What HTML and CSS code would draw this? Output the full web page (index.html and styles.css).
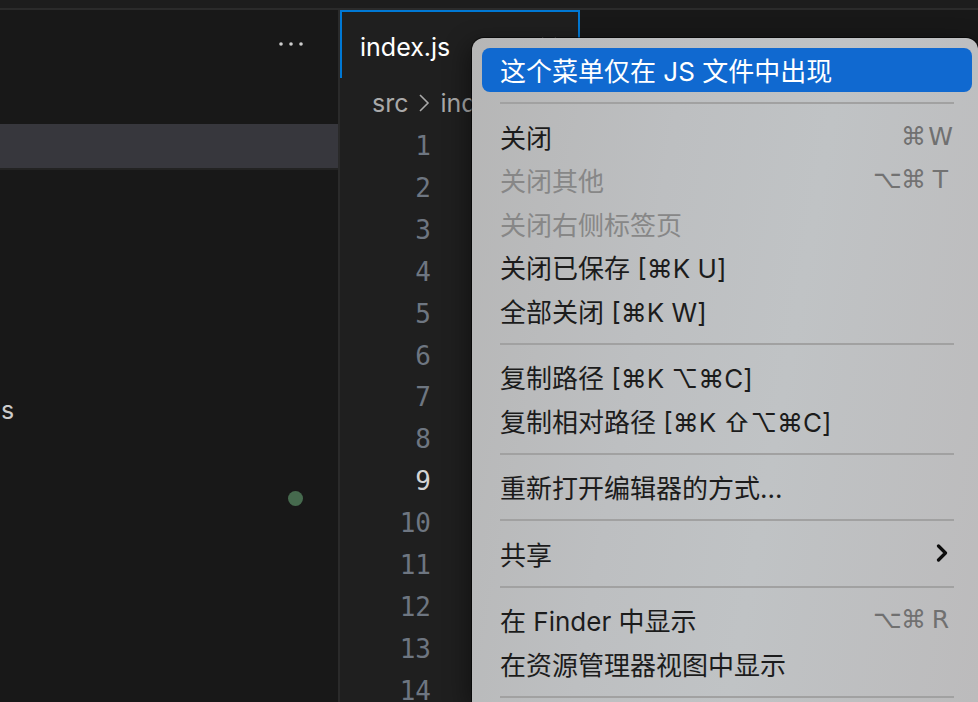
FILE: index.html
```html
<!DOCTYPE html>
<html lang="zh-CN">
<head>
<meta charset="utf-8">
<title>VS Code 菜单</title>
<link rel="stylesheet" href="styles.css">
</head>
<body>
<div class="titlebar"></div>
<div class="main">
  <aside class="sidebar">
    <div class="side-head">
      <svg class="more" width="26" height="6" viewBox="0 0 26 6"><circle cx="3" cy="3" r="1.8"/><circle cx="13" cy="3" r="1.8"/><circle cx="23" cy="3" r="1.8"/></svg>
    </div>
    <div class="side-list">
      <div class="row selected"></div>
      <div class="row"></div>
      <div class="row"></div>
      <div class="row"></div>
      <div class="row"></div>
      <div class="row"></div>
      <div class="row"><span class="fname">s</span></div>
      <div class="row"></div>
      <div class="row dotrow"><span class="dot"></span></div>
    </div>
  </aside>
  <section class="editor">
    <div class="tabs">
      <div class="tab">
        <span class="tab-name">index.js</span>
        <svg class="tab-close" width="18" height="18" viewBox="0 0 18 18"><path d="M2 2 L16 16 M16 2 L2 16"/></svg>
      </div>
    </div>
    <div class="crumbs">
      <span>src</span>
      <svg class="crumb-sep" width="14" height="20" viewBox="0 0 14 20"><path d="M3 2 L11 10 L3 18"/></svg>
      <span>index.js</span>
    </div>
    <div class="code">
      <div class="gutter">
        <div>1</div><div>2</div><div>3</div><div>4</div><div>5</div><div>6</div><div>7</div>
        <div>8</div><div class="cur">9</div><div>10</div><div>11</div><div>12</div><div>13</div><div>14</div>
      </div>
    </div>
  </section>
</div>

<div class="menu">
  <div class="item hl">这个菜单仅在 JS 文件中出现</div>
  <div class="sep"></div>
  <div class="item">关闭<span class="keys"><span class="k">⌘</span><span class="k">W</span></span></div>
  <div class="item dis">关闭其他<span class="keys"><span class="k">⌥</span><span class="k">⌘</span><span class="k">T</span></span></div>
  <div class="item dis">关闭右侧标签页</div>
  <div class="item">关闭已保存 [⌘K U]</div>
  <div class="item">全部关闭 [⌘K W]</div>
  <div class="sep"></div>
  <div class="item">复制路径 [⌘K ⌥⌘C]</div>
  <div class="item">复制相对路径 [⌘K ⇧⌥⌘C]</div>
  <div class="sep"></div>
  <div class="item">重新打开编辑器的方式...</div>
  <div class="sep"></div>
  <div class="item">共享<svg class="chev" width="12" height="18" viewBox="0 0 12 18"><path d="M2.5 2 L9.5 9 L2.5 16"/></svg></div>
  <div class="sep"></div>
  <div class="item">在 Finder 中显示<span class="keys"><span class="k">⌥</span><span class="k">⌘</span><span class="k">R</span></span></div>
  <div class="item">在资源管理器视图中显示</div>
  <div class="sep"></div>
</div>
</body>
</html>
```
FILE: styles.css
```css
html, body {
  margin: 0;
  padding: 0;
}
body {
  width: 978px;
  height: 702px;
  overflow: hidden;
  background: #181818;
  font-family: "Inter", "Noto Sans CJK SC", "DejaVu Sans", sans-serif;
  position: relative;
}
.titlebar {
  height: 8px;
  background: #1d1d1d;
  border-bottom: 2px solid #2b2b2b;
}
.main {
  display: flex;
  height: 692px;
}
.sidebar {
  width: 338px;
  border-right: 2px solid #2a2a2a;
  background: #181818;
  flex: none;
}
.side-head {
  height: 68px;
  display: flex;
  align-items: center;
  justify-content: flex-end;
  padding-right: 34px;
}
.more circle { fill: #cccccc; }
.side-list {
  padding-top: 46px;
}
.row {
  height: 44px;
  display: flex;
  align-items: center;
}
.row.selected {
  background: #37373d;
  box-shadow: 0 2px 0 #232323;
}
.fname {
  color: #cccccc;
  font-size: 25px;
  padding-left: 1px;
}
.dotrow {
  justify-content: flex-end;
  padding-right: 35px;
}
.dot {
  width: 15px;
  height: 15px;
  border-radius: 50%;
  background: #466a4e;
}
.editor {
  flex: 1;
  background: #1f1f1f;
  display: flex;
  flex-direction: column;
  min-height: 0;
  overflow: hidden;
}
.tabs {
  height: 68px;
  flex: none;
  background: #181818;
  display: flex;
}
.tab {
  width: 240px;
  box-sizing: border-box;
  height: 68px;
  background: #1f1f1f;
  border: 2px solid #0078d4;
  border-bottom: none;
  display: flex;
  align-items: center;
  padding-left: 18px;
  padding-right: 20px;
}
.tab-name {
  color: #ffffff;
  font-size: 25px;
  padding-top: 4px;
}
.tab-close {
  margin-left: auto;
}
.tab-close path {
  stroke: #cccccc;
  stroke-width: 2;
  fill: none;
}
.crumbs {
  height: 46px;
  flex: none;
  display: flex;
  align-items: center;
  gap: 9px;
  padding-left: 32px;
  padding-top: 4px;
  box-sizing: border-box;
  color: #a9a9a9;
  font-size: 25px;
}
.crumb-sep path {
  stroke: #a9a9a9;
  stroke-width: 1.6;
  fill: none;
}
.code {
  flex: 1;
  padding-top: 2px;
}
.gutter {
  width: 91px;
  text-align: right;
  font-family: "DejaVu Sans Mono", "Liberation Mono", monospace;
  font-size: 26px;
  line-height: 41.9px;
  color: #6e7681;
}
.gutter .cur { color: #d4d4d4; }

/* context menu overlay */
.menu {
  position: absolute;
  left: 472px;
  top: 38px;
  width: 506px;
  height: 664px;
  overflow: hidden;
  box-sizing: border-box;
  padding: 10px 6px 0 10px;
  border-radius: 12px 12px 0 0;
  background: linear-gradient(100deg, #b6b6b6 0%, #bdbfc1 35%, #c0c3c5 60%, #bcbbbc 100%);
  box-shadow: 0 0 0 1px rgba(0,0,0,0.55), -4px 6px 24px rgba(0,0,0,0.45);
  font-family: "Inter", "Noto Sans CJK SC", "DejaVu Sans", sans-serif;
}
.item {
  height: 43.5px;
  display: flex;
  align-items: center;
  padding: 0 18px;
  font-size: 26px;
  color: #1c1c1c;
  border-radius: 8px;
  white-space: nowrap;
}
.item.hl {
  background: #1069d0;
  color: #ffffff;
}
.item.dis {
  color: #878787;
}
.keys {
  margin-left: auto;
  display: flex;
  color: #707070;
  font-family: "DejaVu Sans", "Inter", sans-serif;
  font-size: 25px;
}
.item.dis .keys { color: #727272; }
.k {
  width: 27px;
  text-align: center;
}
.chev {
  margin-left: auto;
  margin-right: 6px;
}
.chev path {
  stroke: #0d0d0d;
  stroke-width: 3.2;
  fill: none;
  stroke-linecap: round;
  stroke-linejoin: round;
}
.sep {
  height: 23px;
  display: flex;
  align-items: center;
  padding: 0 18px;
}
.sep::before {
  content: "";
  flex: 1;
  height: 2px;
  background: #a1a1a1;
}
```
